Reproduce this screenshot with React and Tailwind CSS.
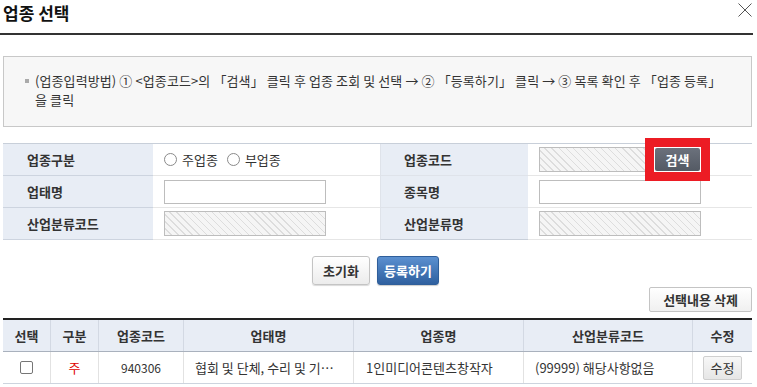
import React from 'react'

const hatch =
  'bg-[repeating-linear-gradient(45deg,#f5f5f5_0px,#f5f5f5_4px,#dddddd_4px,#dddddd_5px)]'

function Radio({ label }) {
  return (
    <label className="flex items-center gap-[5px]">
      <span className="w-[13px] h-[13px] rounded-full border border-[#8a8a8a] bg-white" />
      <span>{label}</span>
    </label>
  )
}

function Label({ children, className = '' }) {
  return (
    <div
      className={`h-[32px] flex items-center bg-[#e8edf5] border-b border-[#cdd4df] font-bold ${className}`}
    >
      {children}
    </div>
  )
}

function Cell({ children, className = '' }) {
  return (
    <div className={`h-[32px] flex items-center pl-[11px] border-b border-[#e6e6e6] ${className}`}>
      {children}
    </div>
  )
}

function App() {
  const cols = [
    { name: '선택', w: 'w-[47px]' },
    { name: '구분', w: 'w-[48px]' },
    { name: '업종코드', w: 'w-[85px]' },
    { name: '업태명', w: 'w-[170px]' },
    { name: '업종명', w: 'w-[170px]' },
    { name: '산업분류코드', w: 'w-[169px]' },
    { name: '수정', w: 'w-[60px]' },
  ]

  return (
    <div className="w-[757px] h-[387px] overflow-hidden bg-white text-[#333] text-[13px] font-['Noto_Sans_CJK_KR',sans-serif]">
      {/* header */}
      <div className="h-[33px] flex items-start justify-between pl-[3px] pr-[5px]">
        <h1 className="text-[17px] font-bold text-[#111] leading-[24px] mt-[1px]">업종 선택</h1>
        <svg width="14" height="14" viewBox="0 0 14 14" className="mt-[3px]">
          <path d="M0.5 0.5 L13.5 13.5 M13.5 0.5 L0.5 13.5" stroke="#555" strokeWidth="1" />
        </svg>
      </div>
      <div className="w-[753px] h-[2px] bg-[#333]" />

      {/* info */}
      <div className="mt-[21px] ml-[3px] w-[749px] h-[71px] border border-[#c8c8c8] bg-[#f7f7f7] pt-[14px] pl-[21px] flex">
        <span className="w-[4px] h-[4px] bg-[#aaa] mt-[8px] mr-[6px] shrink-0" />
        <p className="leading-[19px] tracking-[0.1px]">
          <span className="whitespace-nowrap">
            (업종입력방법) ① &lt;업종코드&gt;의 「검색」 클릭 후 업종 조회 및 선택 → ② 「등록하기」 클릭 → ③ 목록 확인 후 「업종 등록」
          </span>
          <br />
          을 클릭
        </p>
      </div>

      {/* form */}
      <div className="mt-[16px] ml-[3px] w-[749px] border-t border-[#c8cfd9] grid grid-cols-[150px_227px_148px_224px]">
        <Label className="pl-[24px]">업종구분</Label>
        <Cell className="gap-[9px]">
          <Radio label="주업종" />
          <Radio label="부업종" />
        </Cell>
        <Label className="pl-[23px] border-l border-[#dfe3ea]">업종코드</Label>
        <Cell>
          <div className={`w-[110px] h-[25px] border border-[#bdbdbd] ${hatch}`} />
          <div className="relative ml-[6px]">
            <button className="w-[45px] h-[23px] rounded-[2px] bg-linear-to-b from-[#6b717c] to-[#545a64] text-white font-bold text-[13px] leading-[23px]">
              검색
            </button>
            <span className="absolute -inset-[10px] border-[9px] border-[#ec1c24] pointer-events-none" />
          </div>
        </Cell>

        <Label className="pl-[24px]">업태명</Label>
        <Cell>
          <div className="w-[162px] h-[24px] border border-[#bdbdbd] bg-white" />
        </Cell>
        <Label className="pl-[23px] border-l border-[#dfe3ea]">종목명</Label>
        <Cell>
          <div className="w-[162px] h-[24px] border border-[#bdbdbd] bg-white" />
        </Cell>

        <Label className="pl-[24px] border-[#c8cfd9]">산업분류코드</Label>
        <Cell className="border-[#c8cfd9]">
          <div className={`w-[162px] h-[25px] border border-[#bdbdbd] ${hatch}`} />
        </Cell>
        <Label className="pl-[23px] border-l border-[#dfe3ea] border-b-[#c8cfd9]">산업분류명</Label>
        <Cell className="border-[#c8cfd9]">
          <div className={`w-[162px] h-[25px] border border-[#bdbdbd] ${hatch}`} />
        </Cell>
      </div>

      {/* buttons */}
      <div className="mt-[16px] ml-[3px] w-[749px] flex justify-center gap-[7px] pr-[4px]">
        <button className="w-[58px] h-[29px] rounded-[3px] border border-[#c4c4c4] bg-linear-to-b from-white to-[#ececec] font-bold shadow-[0_1px_1px_rgba(0,0,0,0.15)]">
          초기화
        </button>
        <button className="w-[62px] h-[29px] rounded-[3px] border border-[#2f5e9a] bg-linear-to-b from-[#5b90d0] to-[#2f609f] text-white font-bold shadow-[0_1px_1px_rgba(0,0,0,0.2)]">
          등록하기
        </button>
      </div>

      <div className="mt-[2px] ml-[3px] w-[749px] flex justify-end">
        <button className="w-[103px] h-[25px] rounded-[2px] border border-[#c4c4c4] bg-linear-to-b from-white to-[#f0f0f0] font-bold leading-[23px]">
          선택내용 삭제
        </button>
      </div>

      {/* list table */}
      <div className="mt-[6px] ml-[3px] w-[749px] border-t-2 border-[#222]">
        <div className="flex h-[32px] bg-[#e8edf5] border-b border-[#a9b1bd]">
          {cols.map((c, i) => (
            <div
              key={c.name}
              className={`${c.w} flex items-center justify-center font-bold ${i > 0 ? 'border-l border-[#d3d9e3]' : ''}`}
            >
              {c.name}
            </div>
          ))}
        </div>
        <div className="flex h-[32px] border-b border-[#cdd4de]">
          <div className="w-[47px] flex items-center justify-center">
            <span className="w-[13px] h-[13px] rounded-[2px] border border-[#767676] bg-white" />
          </div>
          <div className="w-[48px] flex items-center justify-center border-l border-[#e2e2e2] text-[#e00000]">주</div>
          <div className="w-[85px] flex items-center justify-center border-l border-[#e2e2e2] text-[12px]">940306</div>
          <div className="w-[170px] flex items-center border-l border-[#e2e2e2] pl-[11px]">
            <span className="whitespace-nowrap">협회 및 단체, 수리 및 기…</span>
          </div>
          <div className="w-[170px] flex items-center border-l border-[#e2e2e2] pl-[12px]">1인미디어콘텐츠창작자</div>
          <div className="w-[169px] flex items-center border-l border-[#e2e2e2] pl-[11px]">(99999) 해당사항없음</div>
          <div className="w-[60px] flex items-center justify-center border-l border-[#e2e2e2]">
            <button className="w-[39px] h-[24px] rounded-[2px] border border-[#cfcfcf] bg-linear-to-b from-[#f7f7f7] to-[#e6e6e6] leading-[22px]">
              수정
            </button>
          </div>
        </div>
      </div>
    </div>
  )
}

export default App
